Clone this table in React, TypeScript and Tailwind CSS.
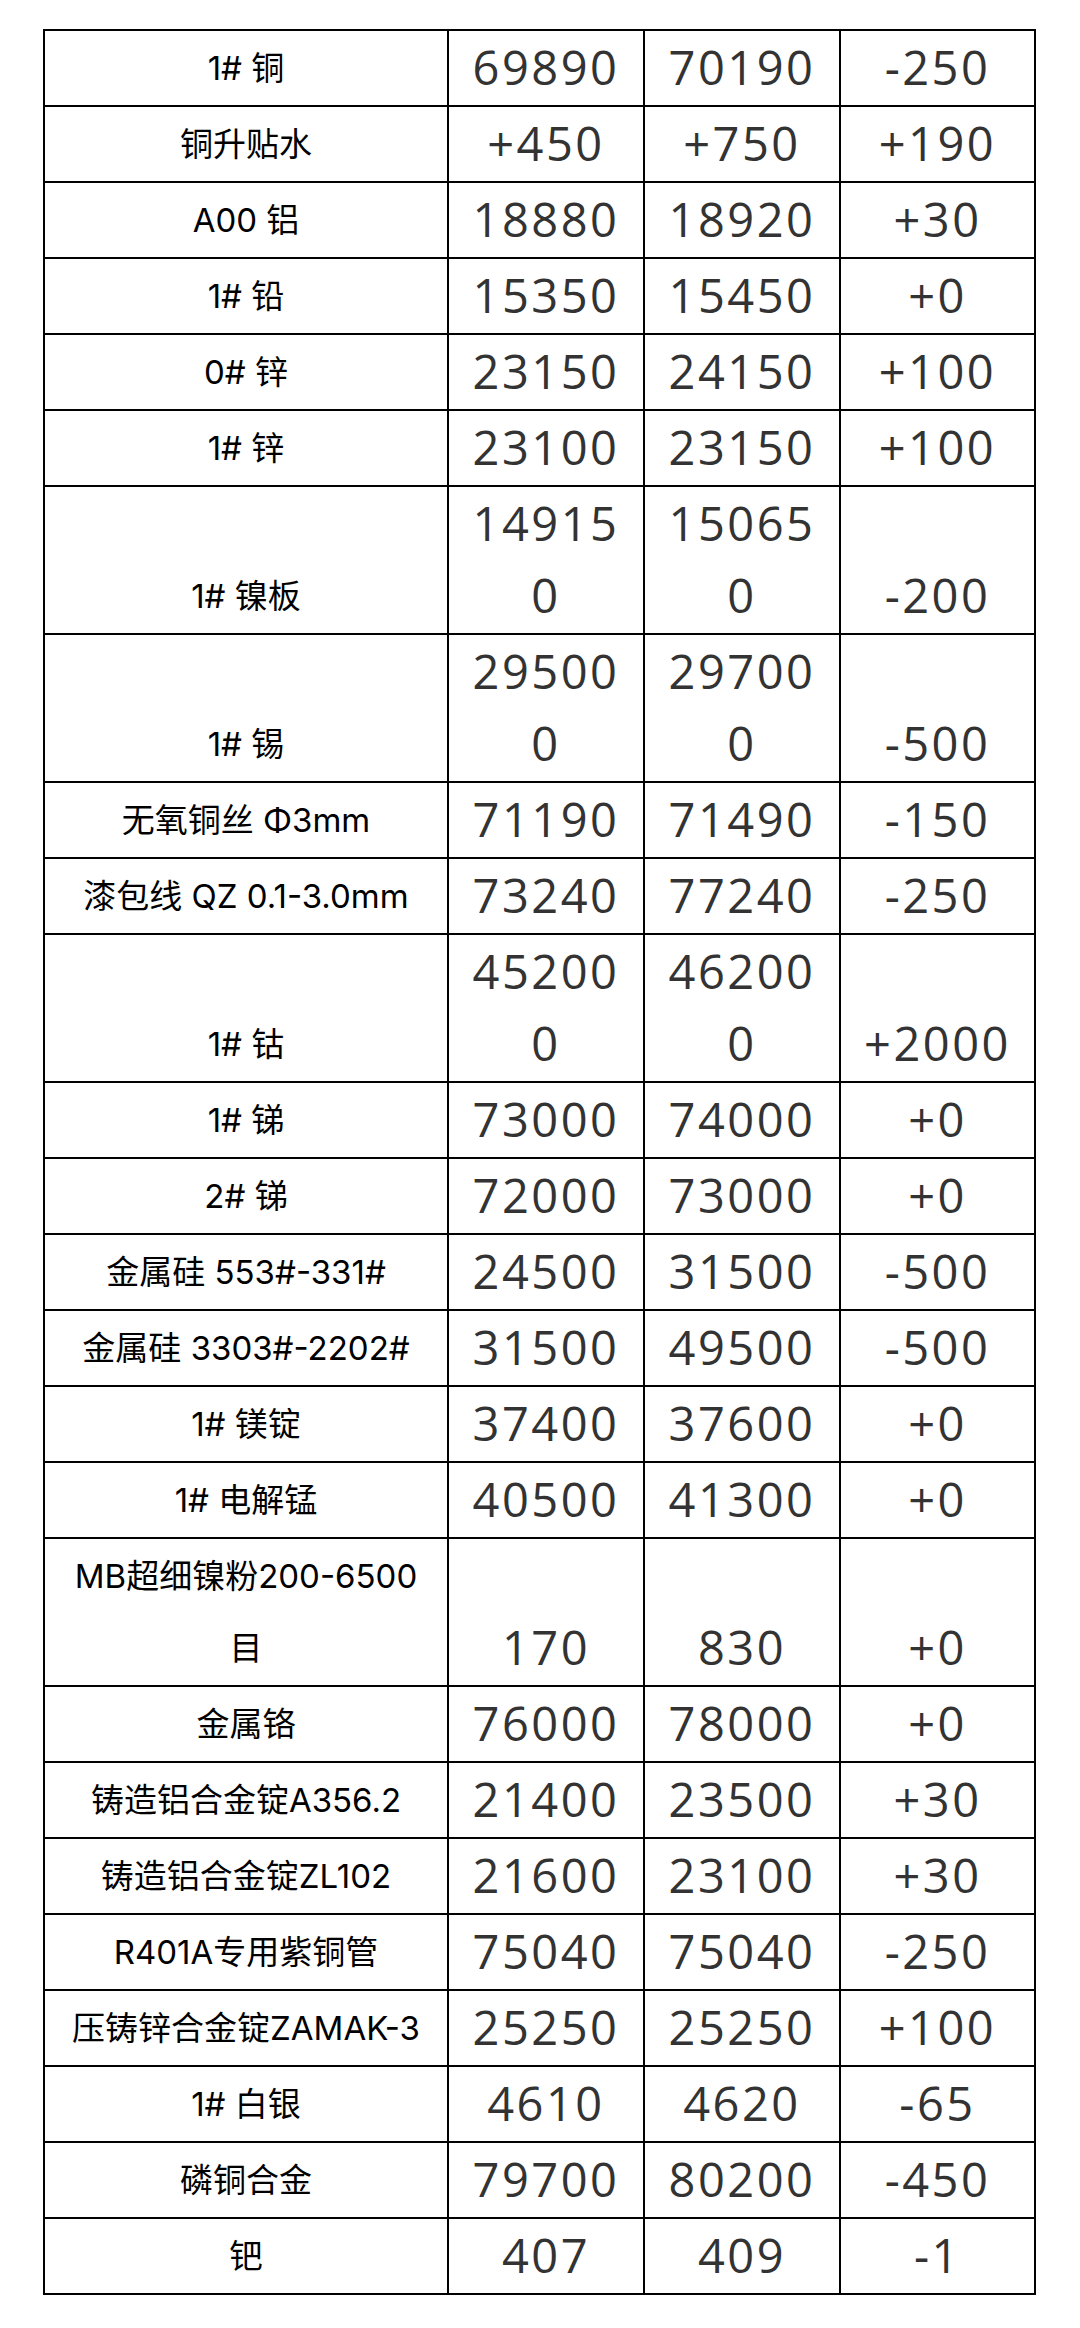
type Row = {
  name: React.ReactNode;
  low: string;
  high: string;
  change: string;
};

const rows: Row[] = [
  { name: "1# 铜", low: "69890", high: "70190", change: "-250" },
  { name: "铜升贴水", low: "+450", high: "+750", change: "+190" },
  { name: "A00 铝", low: "18880", high: "18920", change: "+30" },
  { name: "1# 铅", low: "15350", high: "15450", change: "+0" },
  { name: "0# 锌", low: "23150", high: "24150", change: "+100" },
  { name: "1# 锌", low: "23100", high: "23150", change: "+100" },
  { name: "1# 镍板", low: "149150", high: "150650", change: "-200" },
  { name: "1# 锡", low: "295000", high: "297000", change: "-500" },
  { name: "无氧铜丝 Φ3mm", low: "71190", high: "71490", change: "-150" },
  { name: "漆包线 QZ 0.1-3.0mm", low: "73240", high: "77240", change: "-250" },
  { name: "1# 钴", low: "452000", high: "462000", change: "+2000" },
  { name: "1# 锑", low: "73000", high: "74000", change: "+0" },
  { name: "2# 锑", low: "72000", high: "73000", change: "+0" },
  { name: "金属硅 553#-331#", low: "24500", high: "31500", change: "-500" },
  { name: "金属硅 3303#-2202#", low: "31500", high: "49500", change: "-500" },
  { name: "1# 镁锭", low: "37400", high: "37600", change: "+0" },
  { name: "1# 电解锰", low: "40500", high: "41300", change: "+0" },
  {
    name: (
      <>
        MB超细镍粉200-6500
        <br />目
      </>
    ),
    low: "170",
    high: "830",
    change: "+0",
  },
  { name: "金属铬", low: "76000", high: "78000", change: "+0" },
  { name: "铸造铝合金锭A356.2", low: "21400", high: "23500", change: "+30" },
  { name: "铸造铝合金锭ZL102", low: "21600", high: "23100", change: "+30" },
  { name: "R401A专用紫铜管", low: "75040", high: "75040", change: "-250" },
  { name: "压铸锌合金锭ZAMAK-3", low: "25250", high: "25250", change: "+100" },
  { name: "1# 白银", low: "4610", high: "4620", change: "-65" },
  { name: "磷铜合金", low: "79700", high: "80200", change: "-450" },
  { name: "钯", low: "407", high: "409", change: "-1" },
];

const nameCell =
  "border-2 border-black px-[6px] py-[1px] text-center align-bottom whitespace-nowrap text-[33px] leading-[72px] text-black font-['Inter','Noto_Sans_CJK_SC',sans-serif]";
const numCell =
  "border-2 border-black pt-0 pb-[2px] text-center align-bottom break-all text-[47px] leading-[72px] tracking-[2.5px] text-[#333] font-['Open_Sans','Noto_Sans',sans-serif]";

export default function App() {
  return (
    <div className="min-h-[2328px] w-[1080px] bg-white pt-[29px] pl-[43px]">
      <table className="w-[993px] table-fixed border-collapse border-2 border-black">
        <colgroup>
          <col className="w-[404px]" />
          <col className="w-[196px]" />
          <col className="w-[196px]" />
          <col className="w-[195px]" />
        </colgroup>
        <tbody>
          {rows.map((row, i) => (
            <tr key={i}>
              <td className={nameCell}>{row.name}</td>
              <td className={`${numCell} px-[14px]`}>{row.low}</td>
              <td className={`${numCell} px-[14px]`}>{row.high}</td>
              <td className={`${numCell} px-[4px]`}>{row.change}</td>
            </tr>
          ))}
        </tbody>
      </table>
    </div>
  );
}
